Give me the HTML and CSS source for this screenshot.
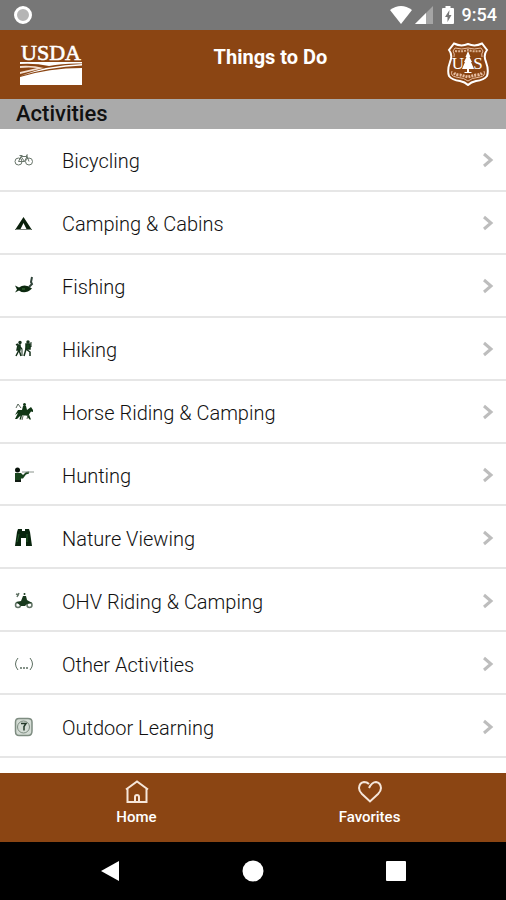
FILE: index.html
```html
<!DOCTYPE html>
<html lang="en">
<head>
	<meta charset="utf-8">
	<meta name="viewport" content="width=device-width, initial-scale=1">
	<title>Things to Do</title>
	<link rel="stylesheet" href="styles.css">
</head>
<body>
<div class="status-bar">
	<svg class="status-dot" viewBox="0 0 20 20"><circle cx="10" cy="10" r="7.5" fill="#b5b5b5" stroke="#fff" stroke-width="3"/></svg>
	<div class="status-icons">
		<svg width="22" height="18" viewBox="0 0 22 18"><path d="M0 4Q11-4 22 4L11 18Z" fill="#fff"/></svg>
		<svg class="signal" width="18" height="18" viewBox="0 0 18 18"><path d="M18 0V18H0Z" fill="#a5a5a5"/><path d="M11 7V18H0Z" fill="#fff"/></svg>
		<svg class="battery" width="12" height="18" viewBox="0 0 12 18"><path d="M3.500 0h5v2H11q1 0 1 1v14q0 1-1 1H1q-1 0-1-1V3q0-1 1-1h2.500z" fill="#fff"/><path d="M7.500 4L3 11h2.500v5L9.500 9H7z" fill="#777"/></svg>
		<span class="clock">9:54</span>
	</div>
</div>

<header class="header">
	<svg class="usda" viewBox="0 0 62 43" role="img" aria-label="USDA">
		<text x="31" y="18" text-anchor="middle" class="usda-text">USDA</text>
		<path d="M0 20h62v1.500Q43 21 29 24Q15 21 0 22z" fill="#fff"/>
		<path d="M0 24Q12 23 24 26Q12 29 0 32v-2Q9 28 17 26Q9 25 0 26z" fill="#f3dfd0"/>
		<path d="M0 34Q28 23 62 22v1.500Q29 25 0 34zM0 35Q29 26 62 26v17H0z" fill="#fff"/>
	</svg>
	<h1 class="title">Things to Do</h1>
	<svg class="shield" viewBox="0 0 42 44" fill="none" stroke="#fff">
		<path d="M7 1.500Q14 5 21 2Q28 5 35 1.500L40 8Q36 13 39 20Q42 28 40 34Q37 38 29 39Q24 40 21 43Q18 40 13 39Q5 38 2 34Q0 28 3 20Q6 13 2 8Z" stroke-width="2"/>
		<path d="M8 6Q15 8 21 6Q27 8 34 6L36 9Q34 12 35 15M6 9L8 6M6 9Q8 12 7 15M5 29Q3 34 9 35Q18 36 21 39Q24 36 33 35Q39 34 37 29" stroke="#e7bda0"/>
		<path d="M8 9Q16 10 21 8Q26 10 34 9" stroke="#dcb292" stroke-width="2" stroke-dasharray="2 1"/>
		<path d="M7 31Q9 33 13 33L21 35L29 33Q33 33 35 31" stroke="#e7bda0" stroke-width="3" stroke-dasharray="2 1"/>
		<path d="M21 9l2.500 6h-1l2.500 5h-1l3 7h-5v3h2l1 1h-8l1-1h2v-3h-5l3-7h-1l2.500-5h-1z" fill="#fff" stroke="none"/>
		<text x="11" y="27" text-anchor="middle" class="shield-text">U</text>
		<text x="31" y="27" text-anchor="middle" class="shield-text">S</text>
	</svg>
</header>

<h2 class="section">Activities</h2>

<main class="list">
	<a class="row" href="#bicycling">
		<svg class="icon" viewBox="0 0 20 20" fill="none" stroke="#68756a"><circle cx="4.500" cy="11.500" r="3.500"/><circle cx="15" cy="11.500" r="3.500"/><path d="M4.500 11.500L7 6.500l3.500 5h-6M10.500 11.500L13 6.500H7M15 11.500L12.500 5H14M5.500 5.500h3"/></svg>
		<span class="label">Bicycling</span>
		<svg class="chevron" viewBox="0 0 12 16"><path d="M2 2l7 6-7 6"/></svg>
	</a>
	<a class="row" href="#camping">
		<svg class="icon" viewBox="0 0 20 20"><path d="M9.500 4L18 17h-5L9.500 10 6 17H1z" fill="#0a200b"/><path d="M2 16.500h15" stroke="#79847a"/></svg>
		<span class="label">Camping &amp; Cabins</span>
		<svg class="chevron" viewBox="0 0 12 16"><path d="M2 2l7 6-7 6"/></svg>
	</a>
	<a class="row" href="#fishing">
		<svg class="icon" viewBox="0 0 20 20"><path d="M1 9.500l4 2Q11 7 18 12.500Q11 19 5 14.500l-4 2 2-3z" fill="#0b280e"/><path d="M18 1l-1 5 1 2-3 3" fill="none" stroke="#30443a" stroke-width="2"/><path d="M8 13h3" stroke="#3c7937"/></svg>
		<span class="label">Fishing</span>
		<svg class="chevron" viewBox="0 0 12 16"><path d="M2 2l7 6-7 6"/></svg>
	</a>
	<a class="row" href="#hiking">
		<svg class="icon" viewBox="0 0 20 20" fill="none" stroke="#15301a" stroke-width="1.500"><circle cx="6" cy="3.500" r="1" fill="#15301a"/><circle cx="14" cy="3" r="1" fill="#15301a"/><path d="M2 6l2-1M5 6v5l-3 6M5 11l2 6M5 7l3 3M14 5l-2 5-2 7M12 10l4 3v4M14 6l3 2" /><path d="M4 6h2v5H3zM12 5h4v5h-4z" fill="#17431c"/><path d="M8 10v7M17 3v5" stroke-width="1"/></svg>
		<span class="label">Hiking</span>
		<svg class="chevron" viewBox="0 0 12 16"><path d="M2 2l7 6-7 6"/></svg>
	</a>
	<a class="row" href="#horses">
		<svg class="icon" viewBox="0 0 20 20" fill="#0f3514"><circle cx="10.500" cy="2.500" r="1.500"/><path d="M9 4h3l1 4 4-3 2 3v2l-2-.5-2 3 2 5h-1.500l-3-4H8l-1 4H5.500l1-4L3 17H1l3-6-3 2 3-5h4z"/><path d="M2 6l2-4 3 4M9 14l-1 4M14 13l-1 4" fill="none" stroke="#566559"/></svg>
		<span class="label">Horse Riding &amp; Camping</span>
		<svg class="chevron" viewBox="0 0 12 16"><path d="M2 2l7 6-7 6"/></svg>
	</a>
	<a class="row" href="#hunting">
		<svg class="icon" viewBox="0 0 20 20"><circle cx="3.500" cy="5" r="2.500" fill="#07120a"/><path d="M1 8h6l2 2 3-3 3-.5v2l-3 1-3 4H7v3H1z" fill="#17431c"/><path d="M1 15h6v2H1z" fill="#101a12"/><path d="M8 7h12" stroke="#8a948c"/></svg>
		<span class="label">Hunting</span>
		<svg class="chevron" viewBox="0 0 12 16"><path d="M2 2l7 6-7 6"/></svg>
	</a>
	<a class="row" href="#nature">
		<svg class="icon" viewBox="0 0 20 20" fill="#08240d"><path d="M4 1h4v2h3V1h4l1 3 2 14h-6v-8H7v8H1L3 4z"/><path d="M5 6l-2 8M13 6v8" stroke="#235c2b" fill="none"/></svg>
		<span class="label">Nature Viewing</span>
		<svg class="chevron" viewBox="0 0 12 16"><path d="M2 2l7 6-7 6"/></svg>
	</a>
	<a class="row" href="#ohv">
		<svg class="icon" viewBox="0 0 20 20"><g fill="none" stroke="#627466" stroke-width="1.500"><circle cx="4" cy="14" r="2.500"/><circle cx="15.500" cy="14" r="2.500"/><path d="M2 3l3 1M3 6l2-4"/></g><circle cx="10.500" cy="3" r="1" fill="#18391d"/><path d="M9 5h3l1 4 5 3-5 1-2 2H7l-5-4 5-1z" fill="#18391d"/></svg>
		<span class="label">OHV Riding &amp; Camping</span>
		<svg class="chevron" viewBox="0 0 12 16"><path d="M2 2l7 6-7 6"/></svg>
	</a>
	<a class="row" href="#other">
		<svg class="icon" viewBox="0 0 20 20" fill="none" stroke="#5d6f62"><path d="M4 4Q-1 10 4 16M16 4Q21 10 16 16"/><path d="M6 14h2M9 14h2M12 14h2" stroke-width="1.500"/></svg>
		<span class="label">Other Activities</span>
		<svg class="chevron" viewBox="0 0 12 16"><path d="M2 2l7 6-7 6"/></svg>
	</a>
	<a class="row" href="#learning">
		<svg class="icon" viewBox="0 0 20 20" fill="#d4dcd5" stroke="#7e8c81"><path d="M5 1.500h9Q18 1.500 18 5v9q0 4.500-4 4.500H5q-3.500 0-3.500-4V5q0-3.500 3.500-3.500z" stroke-width="1.500"/><circle cx="9.500" cy="10" r="6"/><path d="M7 6.500h5l-2 3v4" fill="none" stroke="#233829" stroke-width="1.500"/></svg>
		<span class="label">Outdoor Learning</span>
		<svg class="chevron" viewBox="0 0 12 16"><path d="M2 2l7 6-7 6"/></svg>
	</a>
</main>

<nav class="tabs">
	<a class="tab" href="#home">
		<svg class="tab-icon" viewBox="0 0 24 24"><path d="M1 9.500L12 1.500l11 8M2.500 8.500V22h19V8.500M10 22v-5q0-2 2-2t2 2v5"/></svg>
		Home
	</a>
	<a class="tab" href="#favorites">
		<svg class="tab-icon" viewBox="0 0 24 24"><path d="M11 8Q14 2 18 2Q22.500 2.500 23 8Q23 11 20 14L12 21.500L4 14Q1 11 1 8Q1.500 2.500 6 2Q9 2 11 4"/></svg>
		Favorites
	</a>
</nav>

<div class="system-nav">
	<button type="button" aria-label="Back"><svg viewBox="0 0 22 22"><path d="M20 1v20L2 11z"/></svg></button>
	<button type="button" aria-label="Home screen"><svg viewBox="0 0 22 22"><circle cx="11" cy="11" r="10.500"/></svg></button>
	<button type="button" aria-label="Recent apps"><svg viewBox="0 0 22 22"><rect x="1" y="1" width="20" height="20" rx="1"/></svg></button>
</div>
</body>
</html>
```

FILE: styles.css
```css
* {
	box-sizing: border-box;
	margin: 0;
	padding: 0;
}

body {
	font-family: Roboto, "Liberation Sans", sans-serif;
	min-height: 100vh;
	display: flex;
	flex-direction: column;
	background: #fff;
	color: #111;
}

a {
	color: inherit;
	text-decoration: none;
}

svg {
	display: block;
	flex: none;
}

.status-bar {
	height: 30px;
	padding: 0 9px 0 13px;
	display: flex;
	align-items: center;
	justify-content: space-between;
	background: #777;
	color: #fff;
}

.status-dot {
	width: 20px;
	height: 20px;
}

.status-icons {
	display: flex;
	align-items: center;
	gap: 3px;
}

.battery {
	margin: 0 5px 0 6px;
}

.clock {
	font-size: 18px;
	font-weight: 500;
	line-height: 20px;
}

.header {
	height: 69px;
	padding: 12px 17px 0 20px;
	display: flex;
	align-items: flex-start;
	background: #8b4513;
	color: #fff;
}

.usda {
	width: 62px;
	height: 43px;
	overflow: visible;
}

.usda-text {
	font: 22px "Liberation Serif", serif;
	fill: #fff;
	stroke: #fff;
	stroke-width: 0.6px;
}

.title {
	flex: 1;
	padding-left: 12px;
	font-size: 20px;
	font-weight: 700;
	line-height: 30px;
	text-align: center;
}

.shield {
	width: 42px;
	height: 44px;
}

.shield-text {
	font: 17px "Liberation Serif", serif;
	fill: #fff;
	stroke: none;
}

.section {
	padding: 0 16px;
	font-size: 22px;
	font-weight: 500;
	line-height: 30px;
	background: #aaa;
}

.list {
	flex: 1;
	display: grid;
	grid-auto-rows: 1fr;
	padding-bottom: 15px;
}

.row {
	min-height: 48px;
	padding: 2px 12px 0 14px;
	display: flex;
	align-items: center;
	border-bottom: 2px solid #e6e6e6;
}

.icon {
	width: 20px;
	height: 20px;
}

.label {
	flex: 1;
	margin-left: 28px;
	padding-top: 2px;
	font-size: 20px;
	font-weight: 300;
	line-height: 24px;
}

.chevron {
	width: 12px;
	height: 16px;
	fill: none;
	stroke: #bdbdbd;
	stroke-width: 3;
}

.tabs {
	height: 69px;
	padding: 0 20px;
	display: flex;
	background: #8b4513;
	color: #fff;
}

.tab {
	flex: 1;
	padding-top: 7px;
	display: flex;
	flex-direction: column;
	align-items: center;
	gap: 2px;
	font-size: 15px;
	font-weight: 500;
	line-height: 22px;
}

.tab-icon {
	width: 24px;
	height: 24px;
	fill: none;
	stroke: #f6e6da;
	stroke-width: 2;
}

.system-nav {
	height: 58px;
	padding: 0 39px;
	display: flex;
	background: #000;
}

.system-nav button {
	flex: 1;
	display: flex;
	align-items: center;
	justify-content: center;
	border: 0;
	background: none;
	cursor: pointer;
}

.system-nav svg {
	width: 22px;
	height: 22px;
	fill: #fff;
}
```
